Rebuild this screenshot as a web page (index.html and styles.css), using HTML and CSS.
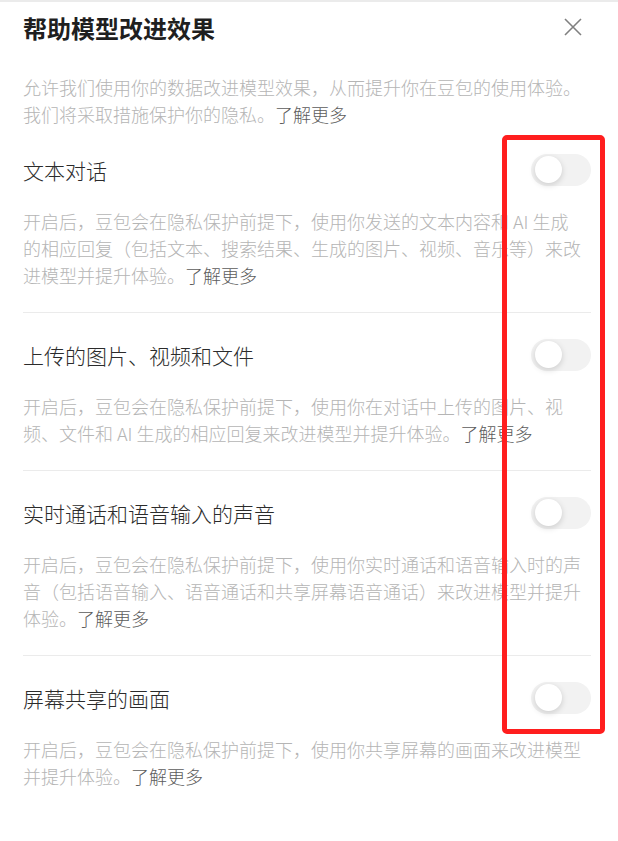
FILE: index.html
```html
<!DOCTYPE html>
<html lang="zh-CN">
<head>
    <meta charset="UTF-8">
    <meta name="viewport" content="width=device-width, initial-scale=1.0">
    <title>帮助模型改进效果</title>
    <link rel="stylesheet" href="styles.css">
</head>
<body>

<div class="panel">
    <header class="panel-header">
        <h1>帮助模型改进效果</h1>
        <button class="close-btn" aria-label="关闭">
            <svg width="18" height="18" viewBox="0 0 18 18">
                <path d="M1 1 L17 17 M17 1 L1 17" stroke="#808080" stroke-width="1.6" fill="none"/>
            </svg>
        </button>
    </header>

    <p class="intro desc">允许我们使用你的数据改进模型效果，从而提升你在豆包的使用体验。我们将采取措施保护你的隐私。<a href="#">了解更多</a></p>

    <section class="setting">
        <div class="setting-row">
            <span class="setting-title">文本对话</span>
            <span class="switch"><span class="knob"></span></span>
        </div>
        <p class="desc">开启后，豆包会在隐私保护前提下，使用你发送的文本内容和 AI 生成的相应回复（包括文本、搜索结果、生成的图片、视频、音乐等）来改进模型并提升体验。<a href="#">了解更多</a></p>
    </section>

    <section class="setting">
        <div class="setting-row">
            <span class="setting-title">上传的图片、视频和文件</span>
            <span class="switch"><span class="knob"></span></span>
        </div>
        <p class="desc">开启后，豆包会在隐私保护前提下，使用你在对话中上传的图片、视频、文件和 AI 生成的相应回复来改进模型并提升体验。<a href="#">了解更多</a></p>
    </section>

    <section class="setting">
        <div class="setting-row">
            <span class="setting-title">实时通话和语音输入的声音</span>
            <span class="switch"><span class="knob"></span></span>
        </div>
        <p class="desc">开启后，豆包会在隐私保护前提下，使用你实时通话和语音输入时的声音（包括语音输入、语音通话和共享屏幕语音通话）来改进模型并提升体验。<a href="#">了解更多</a></p>
    </section>

    <section class="setting">
        <div class="setting-row">
            <span class="setting-title">屏幕共享的画面</span>
            <span class="switch"><span class="knob"></span></span>
        </div>
        <p class="desc">开启后，豆包会在隐私保护前提下，使用你共享屏幕的画面来改进模型并提升体验。<a href="#">了解更多</a></p>
    </section>

    <!-- highlight around the switch column -->
    <div class="highlight"></div>
</div>

</body>
</html>
```

FILE: styles.css
```css
* {
    margin: 0;
    padding: 0;
    box-sizing: border-box;
}

body {
    font-family: "Noto Sans CJK SC", "Noto Sans", sans-serif;
    background-color: #ffffff;
    color: #222;
}

.panel {
    position: relative;
    border-top: 2px solid #ebebeb;
    padding: 0 27px 40px 23px;
}

.panel-header {
    display: flex;
    justify-content: space-between;
    align-items: center;
    padding-top: 10px;
}

.panel-header h1 {
    font-size: 24px;
    line-height: 32px;
    font-weight: bold;
    color: #1f1f1f;
}

.close-btn {
    width: 24px;
    height: 24px;
    margin-right: 6px;
    margin-top: -3px;
    border: none;
    background: none;
    display: flex;
    align-items: center;
    justify-content: center;
    cursor: pointer;
}

.desc {
    font-size: 18px;
    line-height: 27px;
    font-weight: 300;
    color: #b5b5b5;
    max-width: 560px;
}

.desc a {
    color: #5c5c5c;
    text-decoration: none;
}

.intro {
    margin-top: 30px;
}

.setting {
    padding: 26px 0 23.5px;
    border-bottom: 1px solid #ebebeb;
}

.setting:last-of-type {
    border-bottom: none;
}

.setting-row {
    display: flex;
    justify-content: space-between;
    align-items: center;
    height: 32px;
}

.setting-title {
    font-size: 21px;
    line-height: 30px;
    font-weight: 300;
    color: #2b2b2b;
}

.setting .desc {
    margin-top: 21.5px;
}

.switch {
    position: relative;
    width: 60px;
    height: 32px;
    border-radius: 16px;
    background-color: #f2f2f2;
}

.knob {
    position: absolute;
    left: 4px;
    top: 2px;
    width: 27px;
    height: 27px;
    border-radius: 50%;
    background-color: #fff;
    box-shadow: 0 2px 6px rgba(0, 0, 0, 0.16);
}

.highlight {
    position: absolute;
    left: 502px;
    top: 133px;
    width: 103px;
    height: 599px;
    border: 5px solid #ff1e1e;
    border-radius: 5px;
    pointer-events: none;
}
```
